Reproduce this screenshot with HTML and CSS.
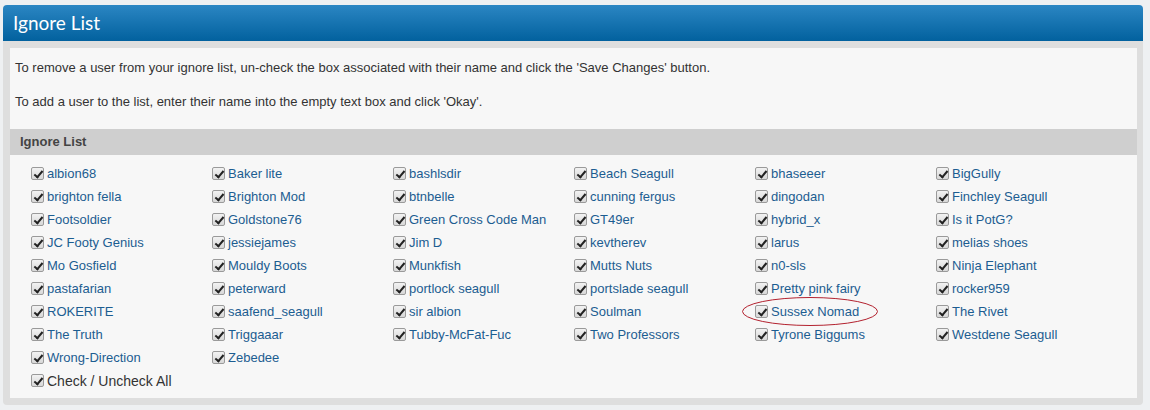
FILE: index.html
```html
<!DOCTYPE html>
<html lang="en">
<head>
    <meta charset="UTF-8" />
    <title>Ignore List</title>
    <link rel="stylesheet" href="styles.css">
</head>
<body>

<div class="box">
    <!-- Заголовок -->
    <div class="box-head">Ignore List</div>

    <div class="box-frame">
        <div class="box-body">
            <div class="intro">
                <p>To remove a user from your ignore list, un-check the box associated with their name and click the 'Save Changes' button.</p>
                <p>To add a user to the list, enter their name into the empty text box and click 'Okay'.</p>
            </div>

            <div class="sub-head">Ignore List</div>

            <div class="users">
                <label class="user"><input type="checkbox" checked><a href="#">albion68</a></label>
                <label class="user"><input type="checkbox" checked><a href="#">Baker lite</a></label>
                <label class="user"><input type="checkbox" checked><a href="#">bashlsdir</a></label>
                <label class="user"><input type="checkbox" checked><a href="#">Beach Seagull</a></label>
                <label class="user"><input type="checkbox" checked><a href="#">bhaseeer</a></label>
                <label class="user"><input type="checkbox" checked><a href="#">BigGully</a></label>

                <label class="user"><input type="checkbox" checked><a href="#">brighton fella</a></label>
                <label class="user"><input type="checkbox" checked><a href="#">Brighton Mod</a></label>
                <label class="user"><input type="checkbox" checked><a href="#">btnbelle</a></label>
                <label class="user"><input type="checkbox" checked><a href="#">cunning fergus</a></label>
                <label class="user"><input type="checkbox" checked><a href="#">dingodan</a></label>
                <label class="user"><input type="checkbox" checked><a href="#">Finchley Seagull</a></label>

                <label class="user"><input type="checkbox" checked><a href="#">Footsoldier</a></label>
                <label class="user"><input type="checkbox" checked><a href="#">Goldstone76</a></label>
                <label class="user"><input type="checkbox" checked><a href="#">Green Cross Code Man</a></label>
                <label class="user"><input type="checkbox" checked><a href="#">GT49er</a></label>
                <label class="user"><input type="checkbox" checked><a href="#">hybrid_x</a></label>
                <label class="user"><input type="checkbox" checked><a href="#">Is it PotG?</a></label>

                <label class="user"><input type="checkbox" checked><a href="#">JC Footy Genius</a></label>
                <label class="user"><input type="checkbox" checked><a href="#">jessiejames</a></label>
                <label class="user"><input type="checkbox" checked><a href="#">Jim D</a></label>
                <label class="user"><input type="checkbox" checked><a href="#">kevtherev</a></label>
                <label class="user"><input type="checkbox" checked><a href="#">larus</a></label>
                <label class="user"><input type="checkbox" checked><a href="#">melias shoes</a></label>

                <label class="user"><input type="checkbox" checked><a href="#">Mo Gosfield</a></label>
                <label class="user"><input type="checkbox" checked><a href="#">Mouldy Boots</a></label>
                <label class="user"><input type="checkbox" checked><a href="#">Munkfish</a></label>
                <label class="user"><input type="checkbox" checked><a href="#">Mutts Nuts</a></label>
                <label class="user"><input type="checkbox" checked><a href="#">n0-sls</a></label>
                <label class="user"><input type="checkbox" checked><a href="#">Ninja Elephant</a></label>

                <label class="user"><input type="checkbox" checked><a href="#">pastafarian</a></label>
                <label class="user"><input type="checkbox" checked><a href="#">peterward</a></label>
                <label class="user"><input type="checkbox" checked><a href="#">portlock seagull</a></label>
                <label class="user"><input type="checkbox" checked><a href="#">portslade seagull</a></label>
                <label class="user"><input type="checkbox" checked><a href="#">Pretty pink fairy</a></label>
                <label class="user"><input type="checkbox" checked><a href="#">rocker959</a></label>

                <label class="user"><input type="checkbox" checked><a href="#">ROKERITE</a></label>
                <label class="user"><input type="checkbox" checked><a href="#">saafend_seagull</a></label>
                <label class="user"><input type="checkbox" checked><a href="#">sir albion</a></label>
                <label class="user"><input type="checkbox" checked><a href="#">Soulman</a></label>
                <label class="user marked"><input type="checkbox" checked><a href="#">Sussex Nomad</a>
                    <!-- пометка красным овалом -->
                    <svg class="ring" width="138" height="31" viewBox="0 0 138 31"><ellipse cx="69" cy="15.5" rx="67.5" ry="14" fill="none" stroke="#b3222f" stroke-width="1"/></svg>
                </label>
                <label class="user"><input type="checkbox" checked><a href="#">The Rivet</a></label>

                <label class="user"><input type="checkbox" checked><a href="#">The Truth</a></label>
                <label class="user"><input type="checkbox" checked><a href="#">Triggaaar</a></label>
                <label class="user"><input type="checkbox" checked><a href="#">Tubby-McFat-Fuc</a></label>
                <label class="user"><input type="checkbox" checked><a href="#">Two Professors</a></label>
                <label class="user"><input type="checkbox" checked><a href="#">Tyrone Biggums</a></label>
                <label class="user"><input type="checkbox" checked><a href="#">Westdene Seagull</a></label>

                <label class="user"><input type="checkbox" checked><a href="#">Wrong-Direction</a></label>
                <label class="user"><input type="checkbox" checked><a href="#">Zebedee</a></label>
            </div>

            <label class="user check-all"><input type="checkbox" checked>Check / Uncheck All</label>
        </div>
    </div>
</div>

</body>
</html>
```

FILE: styles.css
```css
body {
    margin: 0;
    padding: 5px 7px 0 3px;
    background: #eef0f2;
    font-family: Arial, "Liberation Sans", sans-serif;
    font-size: 13px;
    color: #333;
}

/* шапка блока */
.box-head {
    height: 36px;
    line-height: 35px;
    padding-left: 10px;
    border-radius: 4px 4px 0 0;
    background: linear-gradient(#2b86c3, #02619e);
    color: #fff;
    font-family: Lato, "Open Sans", sans-serif;
    font-size: 19px;
}

.box-frame {
    background: #dedede;
    padding: 7px 6px 7px 7px;
    border-radius: 0 0 4px 4px;
}

.box-body {
    background: #f7f7f7;
    padding-bottom: 6px;
}

.intro {
    padding: 11px 5px 2px 5px;
}

.intro p {
    margin: 0 0 16px;
    line-height: 18px;
}

.sub-head {
    background: #cfcfcf;
    height: 26px;
    line-height: 26px;
    padding-left: 10px;
    font-weight: bold;
    color: #444;
}

/* сетка пользователей */
.users {
    display: grid;
    grid-template-columns: repeat(6, 181px);
    padding: 7px 0 0 21px;
}

.user {
    display: flex;
    align-items: center;
    height: 23px;
    position: relative;
}

.user a {
    color: #1c5d91;
    text-decoration: none;
}

.check-all {
    margin-left: 21px;
    color: #333;
    font-size: 14px;
}

.user input {
    appearance: none;
    -webkit-appearance: none;
    width: 13px;
    height: 13px;
    margin: 0 3px 1px 0;
    border: 1px solid #9a9a9a;
    border-radius: 2px;
    background: linear-gradient(#f2f2f2, #d8d8d8);
    position: relative;
    flex: none;
}

.user input:checked::before {
    content: "";
    position: absolute;
    left: 4px;
    top: 1px;
    width: 3px;
    height: 7px;
    border: solid #222;
    border-width: 0 2px 2px 0;
    transform: rotate(40deg);
}

.ring {
    position: absolute;
    left: -14px;
    top: -4px;
    pointer-events: none;
}
```
